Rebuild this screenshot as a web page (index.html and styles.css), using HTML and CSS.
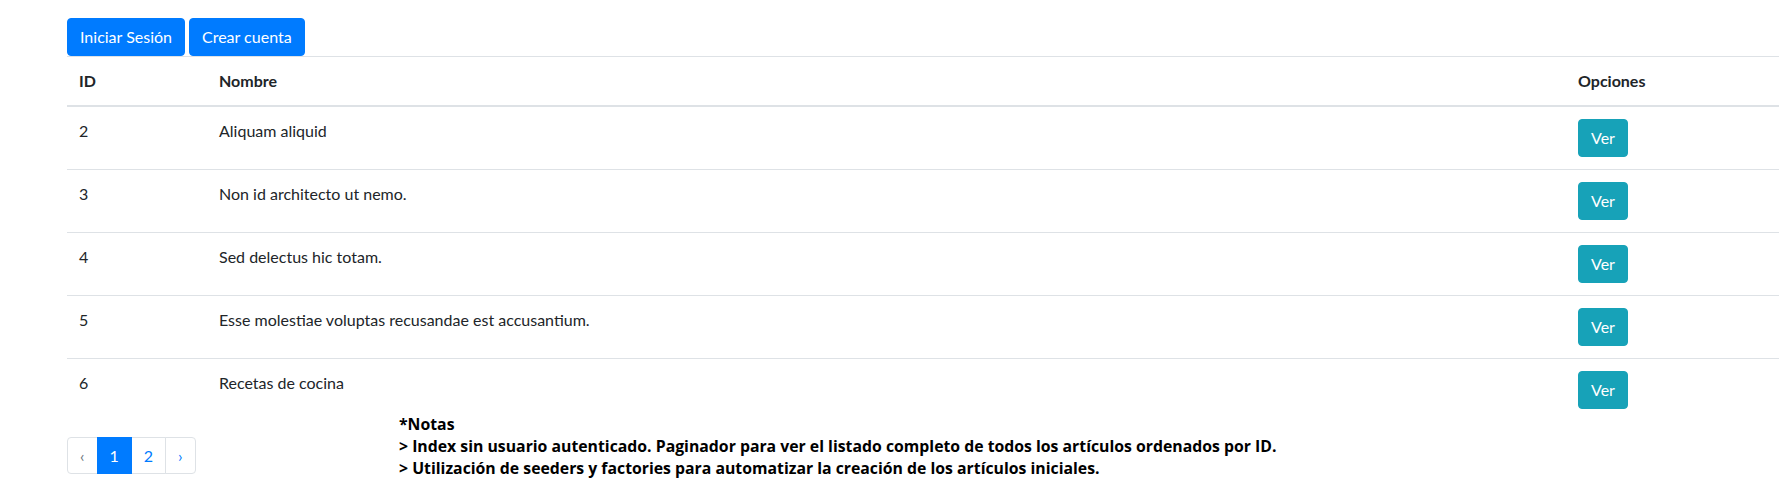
FILE: index.html
```html
<!DOCTYPE html>
<html lang="es">
<head>
<meta charset="utf-8">
<title>Artículos</title>
<link rel="stylesheet" href="styles.css">
</head>
<body>
<div class="page">
  <div class="auth">
    <a class="btn btn-primary" href="#">Iniciar Sesión</a>
    <a class="btn btn-primary" href="#">Crear cuenta</a>
  </div>
  <table class="table">
    <thead>
      <tr><th class="col-id">ID</th><th>Nombre</th><th class="col-opt">Opciones</th></tr>
    </thead>
    <tbody>
      <tr><td>2</td><td>Aliquam aliquid</td><td><a class="btn btn-info" href="#">Ver</a></td></tr>
      <tr><td>3</td><td>Non id architecto ut nemo.</td><td><a class="btn btn-info" href="#">Ver</a></td></tr>
      <tr><td>4</td><td>Sed delectus hic totam.</td><td><a class="btn btn-info" href="#">Ver</a></td></tr>
      <tr><td>5</td><td>Esse molestiae voluptas recusandae est accusantium.</td><td><a class="btn btn-info" href="#">Ver</a></td></tr>
      <tr><td>6</td><td>Recetas de cocina</td><td><a class="btn btn-info" href="#">Ver</a></td></tr>
    </tbody>
  </table>
  <ul class="pagination">
    <li class="page-item disabled"><span class="page-link">‹</span></li>
    <li class="page-item active"><span class="page-link">1</span></li>
    <li class="page-item"><a class="page-link" href="#">2</a></li>
    <li class="page-item"><a class="page-link" href="#">›</a></li>
  </ul>
  <div class="notes">
    <div>*Notas</div>
    <div>&gt; Index sin usuario autenticado. Paginador para ver el listado completo de todos los artículos ordenados por ID.</div>
    <div>&gt; Utilización de seeders y factories para automatizar la creación de los artículos iniciales.</div>
  </div>
</div>
</body>
</html>
```

FILE: styles.css
```css
* { box-sizing: border-box; }
html, body { margin: 0; padding: 0; background: #fff; }
body {
  font-family: Lato, "Open Sans", sans-serif;
  font-size: 16px;
  line-height: 24px;
  color: #212529;
  overflow: hidden;
}
.page {
  position: relative;
  padding: 18px 0 0 67px;
  min-height: 499px;
}
.auth { display: flex; gap: 4px; }
.btn {
  display: inline-block;
  vertical-align: top;
  padding: 6px 12px;
  line-height: 24px;
  font-size: 16px;
  border: 1px solid transparent;
  border-radius: 4px;
  color: #fff;
  text-decoration: none;
}
.btn-primary { background: #007bff; border-color: #007bff; }
.btn-info { background: #17a2b8; border-color: #17a2b8; }
.table {
  width: 100%;
  border-collapse: collapse;
  margin-bottom: 16px;
}
.table th, .table td {
  padding: 12px;
  text-align: left;
  vertical-align: top;
  border-top: 1px solid #dee2e6;
}
.table th {
  font-weight: 700;
  vertical-align: bottom;
  border-bottom: 2px solid #dee2e6;
}
.col-id { width: 140px; }
.col-opt { width: 213px; }
.pagination {
  display: flex;
  list-style: none;
  margin: 0;
  padding: 0;
}
.page-link {
  display: block;
  padding: 8px 12px;
  line-height: 19px;
  border: 1px solid #dee2e6;
  margin-left: -1px;
  color: #007bff;
  background: #fff;
  text-decoration: none;
}
.page-item:first-child .page-link { margin-left: 0; border-radius: 4px 0 0 4px; }
.page-item:last-child .page-link { border-radius: 0 4px 4px 0; }
.page-item.active .page-link { background: #007bff; border-color: #007bff; color: #fff; position: relative; z-index: 1; }
.page-item.disabled .page-link { color: #6c757d; }
.notes {
  position: absolute;
  left: 399px;
  top: 413px;
  font-family: "Open Sans", Lato, sans-serif;
  font-weight: 700;
  font-size: 15.8px;
  line-height: 22px;
  color: #000;
}
```
